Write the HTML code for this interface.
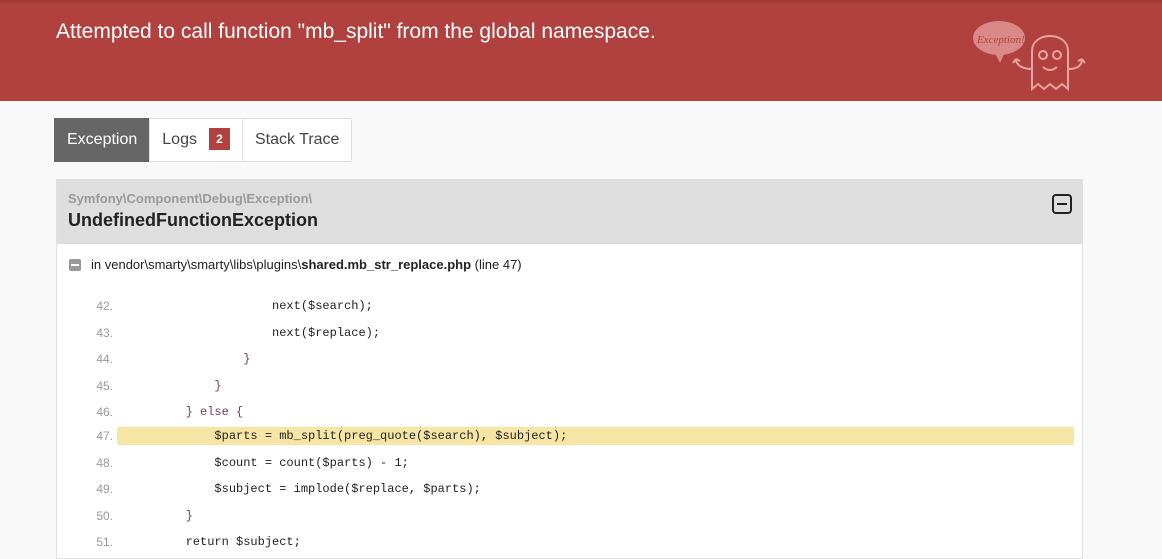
<!DOCTYPE html>
<html><head><style>
body{margin:0;width:1162px;height:544px;overflow:hidden;background:#f9f9f9;font-family:"Liberation Sans",Arial,sans-serif;}
.hdr{position:absolute;left:0;top:0;width:1162px;height:101px;background:#b0413e;border-top:3px solid #a33a37;box-sizing:border-box;}
.hdr h1{position:absolute;left:56px;top:17px;margin:0;font-size:21px;font-weight:normal;color:#fff;}
.tabs{position:absolute;left:55px;top:118px;height:44px;display:flex;}
.tab{height:44px;line-height:42px;box-sizing:border-box;border:1px solid #ddd;background:#fff;color:#444;font-size:16px;padding:0 12px;margin-left:-1px;}
.tab.act{background:#666;color:#fff;border-color:#666;}
.badge{display:inline-block;background:#b0413e;color:#fff;font-size:12px;font-weight:bold;width:21px;height:22px;line-height:22px;text-align:center;margin-left:12px;vertical-align:1px;}
.panel{position:absolute;left:56px;top:179px;width:1027px;height:380px;background:#fff;border:1px solid #e0e0e0;box-sizing:border-box;}
.ph{height:64px;background:#dedede;position:relative;}
.ns{position:absolute;left:11px;top:11px;font-size:13px;font-weight:bold;color:#999;}
.cls{position:absolute;left:11px;top:30px;font-size:18px;font-weight:bold;color:#222;}
.tog{position:absolute;left:995px;top:14px;width:16px;height:16px;border:2px solid #222;border-radius:4px;}
.tog:after{content:"";position:absolute;left:3px;top:7px;width:10px;height:2px;background:#222;}
.loc{position:absolute;left:12px;top:77px;font-size:13px;color:#222;}
.loc i{display:inline-block;width:12px;height:12px;background:#999;border-radius:2px;vertical-align:-2px;margin-right:10px;position:relative;}
.loc i:after{content:"";position:absolute;left:2px;top:5px;width:8px;height:2px;background:#fff;}
.code{position:absolute;left:0;top:113px;width:1027px;font-family:"Liberation Mono",monospace;font-size:12px;}
.ln{position:absolute;height:18px;line-height:18px;left:60px;width:957px;white-space:pre;color:#222;}
.ln.hl{background:#f7e5a5;}
.ln span.n{position:absolute;left:-60px;width:56px;text-align:right;font-family:"Liberation Sans",sans-serif;color:#999;}
.ln span.c{position:absolute;left:11px;}
.p{color:#7a3b5a;}
</style></head><body>
<div class="hdr"><h1>Attempted to call function "mb_split" from the global namespace.</h1>
<svg style="position:absolute;left:960px;top:0px" width="140" height="100" viewBox="960 0 140 100" fill="none" stroke="#e8a4a2" stroke-width="2">
<ellipse cx="999" cy="35" rx="26" ry="17" fill="#d98a88" stroke="none"/>
<path d="M995 50 L1000 60 L1005 49" fill="#d98a88" stroke="none"/>
<text x="977" y="40" font-family="Liberation Serif" font-style="italic" font-size="11" fill="#b0413e" stroke="none">Exception!</text>
<path d="M1032 86 L1032 48 C1032 28 1068 28 1068 48 L1068 86 L1062 81 L1056 86 L1050 81 L1044 86 L1038 81 Z"/>
<circle cx="1043" cy="52" r="4"/><circle cx="1057" cy="52" r="4"/>
<path d="M1043 64 Q1050 70 1057 64"/>
<path d="M1032 66 C1022 66 1016 62 1016 56 M1016 56 L1013 60 M1016 56 L1020 58 M1068 66 C1078 66 1082 62 1082 56 M1082 56 L1085 60 M1082 56 L1078 58"/>
</svg></div>
<div class="tabs"><div class="tab act">Exception</div><div class="tab">Logs<span class="badge">2</span></div><div class="tab">Stack Trace</div></div>
<div class="panel">
<div class="ph"><div class="ns">Symfony\Component\Debug\Exception\</div><div class="cls">UndefinedFunctionException</div><div class="tog"></div></div>
<div class="loc"><i></i>in vendor\smarty\smarty\libs\plugins\<b>shared.mb_str_replace.php</b> (line 47)</div>
<div class="code">
<div class="ln" style="top:4px"><span class="n">42.</span><span class="c">                    next($search);</span></div>
<div class="ln" style="top:31px"><span class="n">43.</span><span class="c">                    next($replace);</span></div>
<div class="ln" style="top:57px"><span class="n">44.</span><span class="c p">                }</span></div>
<div class="ln" style="top:84px"><span class="n">45.</span><span class="c p">            }</span></div>
<div class="ln" style="top:110px"><span class="n">46.</span><span class="c p">        } else {</span></div>
<div class="ln hl" style="top:134px"><span class="n">47.</span><span class="c">            $parts = mb_split(preg_quote($search), $subject);</span></div>
<div class="ln" style="top:161px"><span class="n">48.</span><span class="c">            $count = count($parts) - 1;</span></div>
<div class="ln" style="top:187px"><span class="n">49.</span><span class="c">            $subject = implode($replace, $parts);</span></div>
<div class="ln" style="top:214px"><span class="n">50.</span><span class="c p">        }</span></div>
<div class="ln" style="top:240px"><span class="n">51.</span><span class="c">        return $subject;</span></div>
</div></div>
</body></html>
